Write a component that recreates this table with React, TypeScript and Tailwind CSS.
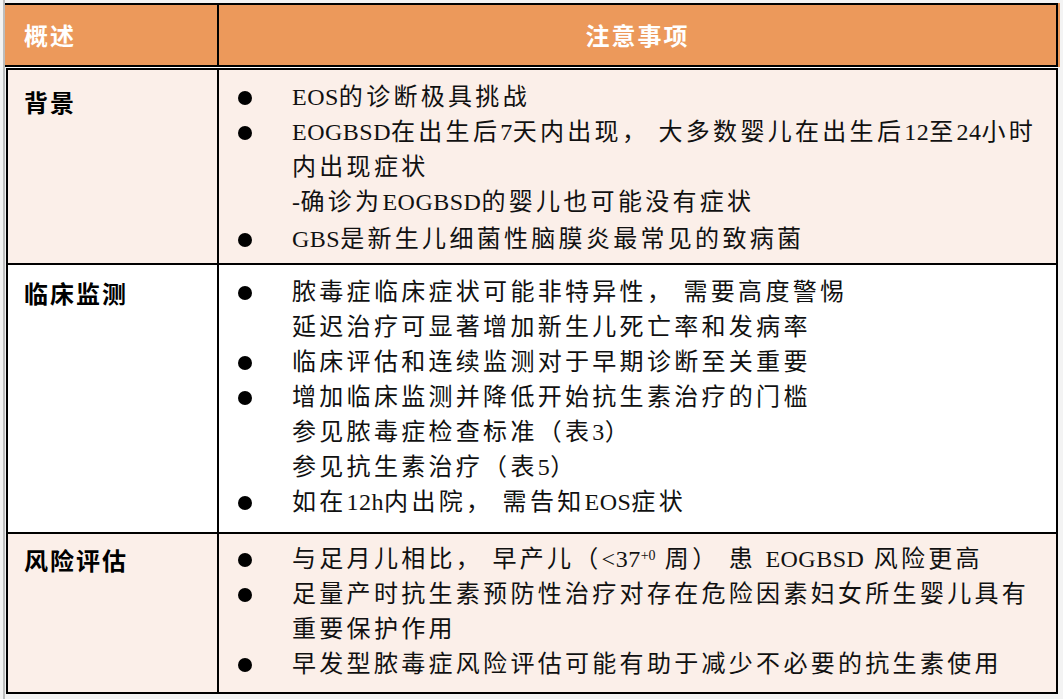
import React from 'react'

// 拉丁字母和数字用衬线字，不加字距
const L = ({ children }: { children: React.ReactNode }) => (
    <span className="text-[24px] tracking-[0.5px]">{children}</span>
)

type Item = { lines: React.ReactNode[]; extraTop?: boolean }

function Bullets({ items }: { items: Item[] }) {
    return (
        <div className="flex flex-col">
            {items.map((item, i) => (
                <div key={i} className={`grid grid-cols-[73px_1fr] ${item.extraTop ? 'mt-[2px]' : ''}`}>
                    <div className="h-[35px] flex items-center">
                        <span className="ml-[19px] w-[14px] h-[14px] rounded-full bg-black" />
                    </div>
                    <div className="flex flex-col">
                        {item.lines.map((line, j) => (
                            <div key={j} className="h-[35px] leading-[35px] whitespace-nowrap">
                                {line}
                            </div>
                        ))}
                    </div>
                </div>
            ))}
        </div>
    )
}

function Row({ label, items, bg, height, pt, labelPt }: {
    label: string
    items: Item[]
    bg: string
    height: string
    pt: string
    labelPt: string
}) {
    return (
        <div className={`ml-[1px] mr-[2px] grid grid-cols-[211px_1fr] border-l-2 border-r-2 border-b-2 border-black ${bg}`}>
            <div className={`border-r-2 border-black pl-[16px] ${height} ${labelPt}`}>
                <div className="h-[35px] leading-[35px] font-bold text-[24px] tracking-[2px] text-black" style={{ fontFamily: '"Noto Sans CJK SC", sans-serif' }}>
                    {label}
                </div>
            </div>
            <div className={`${height} ${pt}`}>
                <Bullets items={items} />
            </div>
        </div>
    )
}

export default function App() {
    const row1: Item[] = [
        { lines: [<><L>EOS</L>的诊断极具挑战</>] },
        {
            lines: [
                <><L>EOGBSD</L>在出生后<L>7</L>天内出现， 大多数婴儿在出生后<L>12</L>至<L>24</L>小时</>,
                <>内出现症状</>,
                <><L>-</L>确诊为<L>EOGBSD</L>的婴儿也可能没有症状</>,
            ],
        },
        { lines: [<><L>GBS</L>是新生儿细菌性脑膜炎最常见的致病菌</>], extraTop: true },
    ]

    const row2: Item[] = [
        { lines: [<>脓毒症临床症状可能非特异性， 需要高度警惕</>, <>延迟治疗可显著增加新生儿死亡率和发病率</>] },
        { lines: [<>临床评估和连续监测对于早期诊断至关重要</>] },
        {
            lines: [
                <>增加临床监测并降低开始抗生素治疗的门槛</>,
                <>参见脓毒症检查标准（表<L>3</L>）</>,
                <>参见抗生素治疗（表<L>5</L>）</>,
            ],
        },
        { lines: [<>如在<L>12h</L>内出院， 需告知<L>EOS</L>症状</>] },
    ]

    const row3: Item[] = [
        {
            lines: [
                <>与足月儿相比， 早产儿（<L>&lt;37</L><sup className="text-[14px] tracking-normal" style={{ fontFamily: '"Liberation Serif", serif' }}>+0</sup> 周） 患 <L>EOGBSD</L> 风险更高</>,
            ],
        },
        { lines: [<>足量产时抗生素预防性治疗对存在危险因素妇女所生婴儿具有</>, <>重要保护作用</>] },
        { lines: [<>早发型脓毒症风险评估可能有助于减少不必要的抗生素使用</>] },
    ]

    return (
        <div
            className="w-[1063px] h-[699px] bg-[#f3f3f3] overflow-hidden text-[24px] tracking-[3.3px] text-[#111]"
            style={{ fontFamily: '"Liberation Serif", "Noto Sans CJK SC", serif' }}
        >
            <div className="ml-[3px] h-full border-l-2 border-[#bdbdbd]">
                <div className="w-[1055px] pt-[3px]">
                    {/* 表头 */}
                    <div className="bg-[#ec995b] pr-[2px]">
                        <div className="h-[64px] grid grid-cols-[214px_1fr] border-t-2 border-r-2 border-b-2 border-black">
                            <div className="border-r-2 border-black pl-[19px] flex items-center">
                                <span className="text-white font-bold text-[24px] tracking-[2px]" style={{ fontFamily: '"Noto Sans CJK SC", sans-serif' }}>概述</span>
                            </div>
                            <div className="flex items-center justify-center">
                                <span className="text-white font-bold text-[24px] tracking-[2px]" style={{ fontFamily: '"Noto Sans CJK SC", sans-serif' }}>注意事项</span>
                            </div>
                        </div>
                    </div>
                    <div className="bg-white pt-[1px] mr-[2px] ml-[1px]">
                        <div className="border-t-2 border-black" />
                    </div>
                    <Row label="背景" items={row1} bg="bg-[#fbefe9]" height="h-[193px]" pt="pt-[10px]" labelPt="pt-[14px]" />
                    <Row label="临床监测" items={row2} bg="bg-white" height="h-[267px]" pt="pt-[10px]" labelPt="pt-[10px]" />
                    <Row label="风险评估" items={row3} bg="bg-[#fbefe9]" height="h-[158px]" pt="pt-[8px]" labelPt="pt-[8px]" />
                </div>
            </div>
        </div>
    )
}
